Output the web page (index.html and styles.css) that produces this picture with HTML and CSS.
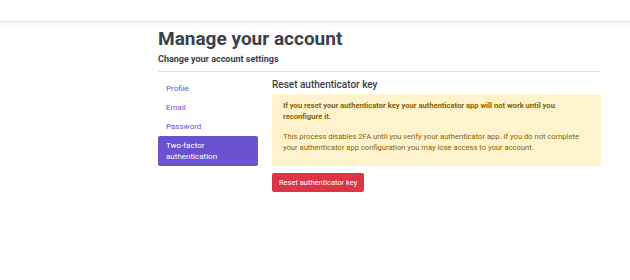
FILE: index.html
```html
<!DOCTYPE html>
<html lang="en">
<head>
  <meta charset="UTF-8">
  <title>Manage your account</title>
  <link rel="stylesheet" href="styles.css">
</head>
<body>
  <header class="navbar"></header>
  <main class="container">
    <h1>Manage your account</h1>
    <h2 class="subtitle">Change your account settings</h2>
    <hr>
    <div class="row">
      <ul class="nav">
        <li><a href="#">Profile</a></li>
        <li><a href="#">Email</a></li>
        <li><a href="#">Password</a></li>
        <li><a href="#" class="active">Two-factor authentication</a></li>
      </ul>
      <section class="content">
        <h3>Reset authenticator key</h3>
        <div class="alert">
          <p class="strong">If you reset your authenticator key your authenticator app will not work until you reconfigure it.</p>
          <p>This process disables 2FA until you verify your authenticator app. If you do not complete your authenticator app configuration you may lose access to your account.</p>
        </div>
        <button class="btn-danger">Reset authenticator key</button>
      </section>
    </div>
  </main>
</body>
</html>
```

FILE: styles.css
```css
body {
  margin: 0;
  font-family: Roboto, "Liberation Sans", sans-serif;
  color: #3a404a;
  background: #fff;
}
.navbar {
  height: 21px;
  border-bottom: 1px solid #e5e5e5;
  box-shadow: 0 3px 6px rgba(0, 0, 0, 0.05);
}
.container {
  margin-left: 158px;
  width: 443px;
}
h1 {
  font-size: 19px;
  font-weight: 700;
  line-height: 24px;
  margin: 5px 0 0;
}
.subtitle {
  font-size: 9px;
  font-weight: 700;
  line-height: 12px;
  margin: 2px 0 0;
}
hr {
  border: 0;
  border-top: 1px solid #e2e2e2;
  margin: 6px 0 7px;
}
.row {
  display: flex;
  gap: 14px;
}
.nav {
  list-style: none;
  margin: 0;
  padding: 0;
  width: 100px;
  flex-shrink: 0;
}
.nav a {
  display: block;
  padding: 4px 8px;
  font-size: 8px;
  line-height: 11px;
  color: #6a55d2;
  text-decoration: none;
  border-radius: 2px;
}
.nav a.active {
  background: #6a52d1;
  color: #fff;
}
.content {
  flex: 1;
}
h3 {
  font-size: 10px;
  font-weight: 500;
  line-height: 12px;
  margin: 0 0 3px;
}
.alert {
  background: #fff3cd;
  color: #856404;
  padding: 6px 11px 13px;
  border-radius: 2px;
  font-size: 7.6px;
  line-height: 11px;
}
.alert p {
  margin: 0;
}
.alert p.strong {
  font-weight: 700;
  margin-bottom: 9px;
}
.btn-danger {
  margin-top: 7px;
  background: #dc3545;
  color: #fff;
  border: 0;
  border-radius: 2px;
  font-family: inherit;
  font-size: 7.5px;
  line-height: 11px;
  padding: 4px 7px;
}
```
